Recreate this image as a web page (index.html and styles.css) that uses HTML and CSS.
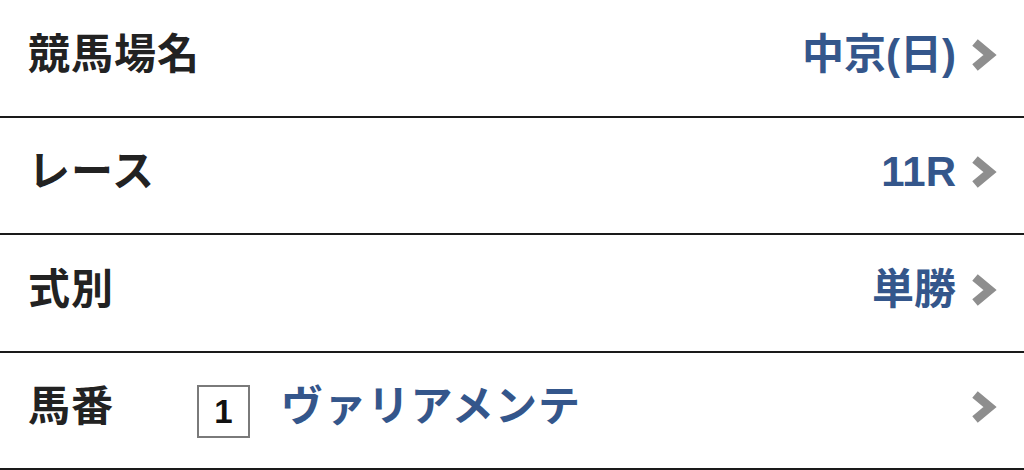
FILE: index.html
```html
<!DOCTYPE html>
<html lang="ja">
<head>
<meta charset="utf-8">
<link rel="stylesheet" href="styles.css">
</head>
<body>
<ul class="list">
  <li class="row">
    <span class="label">競馬場名</span>
    <span class="value">中京(日)</span>
    <svg class="chev" viewBox="0 0 28 34" width="28" height="34"><polyline points="5,4.5 20,17 5,29.5"/></svg>
  </li>
  <li class="row">
    <span class="label">レース</span>
    <span class="value">11R</span>
    <svg class="chev" viewBox="0 0 28 34" width="28" height="34"><polyline points="5,4.5 20,17 5,29.5"/></svg>
  </li>
  <li class="row">
    <span class="label">式別</span>
    <span class="value">単勝</span>
    <svg class="chev" viewBox="0 0 28 34" width="28" height="34"><polyline points="5,4.5 20,17 5,29.5"/></svg>
  </li>
  <li class="row">
    <span class="label label-fixed">馬番</span>
    <span class="num">1</span>
    <span class="horse">ヴァリアメンテ</span>
    <svg class="chev" viewBox="0 0 28 34" width="28" height="34"><polyline points="5,4.5 20,17 5,29.5"/></svg>
  </li>
</ul>
</body>
</html>
```

FILE: styles.css
```css
html, body {
  margin: 0;
  padding: 0;
  background: #ffffff;
}
body {
  font-family: "Liberation Sans", "Noto Sans CJK JP", sans-serif;
  font-weight: bold;
}
.list {
  list-style: none;
  margin: 0;
  padding: 0;
}
.row {
  box-sizing: border-box;
  height: 117.5px;
  border-bottom: 2px solid #1a1a1a;
  display: flex;
  align-items: center;
  padding: 0 26px 6px 28px;
}
.label {
  font-size: 42px;
  line-height: 1;
  color: #222222;
  flex: 1;
  letter-spacing: 1px;
}
.label-fixed {
  flex: 0 0 169px;
}
.value {
  font-size: 42px;
  line-height: 1;
  color: #34568b;
  margin-right: 14px;
}
.num {
  box-sizing: border-box;
  width: 53px;
  height: 53px;
  border: 2px solid #7a7a7a;
  display: flex;
  align-items: center;
  justify-content: center;
  font-family: "Liberation Sans", sans-serif;
  font-size: 33px;
  line-height: 1;
  color: #111111;
  margin-top: 8px;
}
.horse {
  flex: 1;
  margin-left: 31px;
  font-size: 42px;
  line-height: 1;
  color: #34568b;
  letter-spacing: 1.2px;
}
.chev {
  display: block;
  flex: none;
}
.chev polyline {
  fill: none;
  stroke: #8e8e8e;
  stroke-width: 8.5;
  stroke-linejoin: miter;
}
```
